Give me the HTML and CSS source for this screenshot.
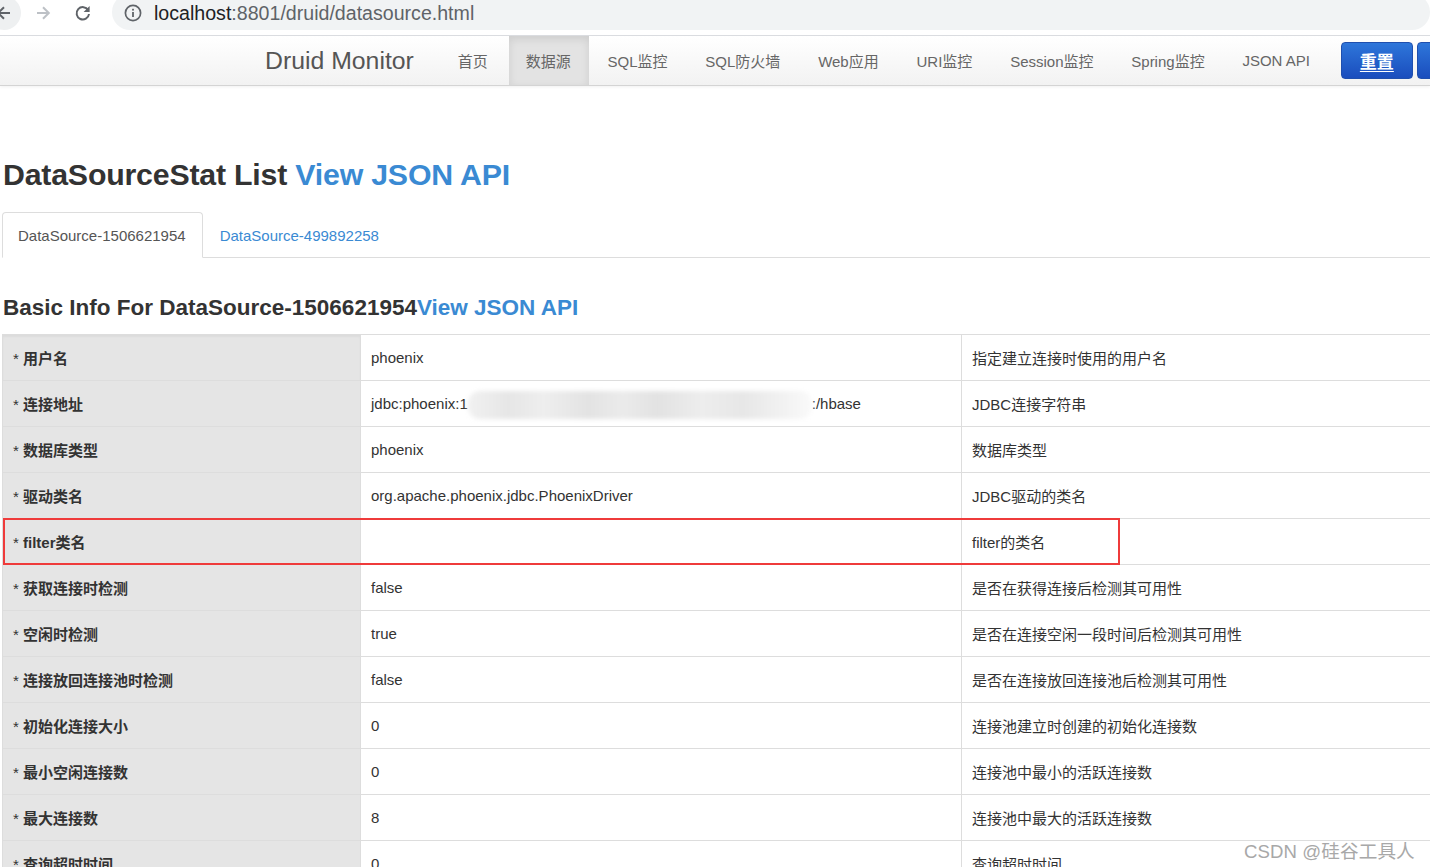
FILE: index.html
```html
<!DOCTYPE html>
<html lang="zh-CN">
<head>
<meta charset="utf-8">
<title>Druid DataSource</title>
<link rel="stylesheet" href="styles.css">
</head>
<body>
<div class="chrome">
  <div class="chrome-btn back">
    <svg width="20" height="20" viewBox="0 0 20 20"><path d="M16 10H4.5M10 4.2L4.2 10l5.8 5.8" fill="none" stroke="#5f6368" stroke-width="2"/></svg>
  </div>
  <div class="chrome-btn fwd">
    <svg width="20" height="20" viewBox="0 0 20 20"><path d="M4 10h11.5M10 4.2l5.8 5.8-5.8 5.8" fill="none" stroke="#bdc1c6" stroke-width="2"/></svg>
  </div>
  <div class="chrome-btn reload">
    <svg width="20" height="20" viewBox="0 0 20 20"><path d="M15.2 7.2A6.2 6.2 0 1 0 16 11" fill="none" stroke="#5f6368" stroke-width="2"/><path d="M16.6 3v6h-6z" fill="#5f6368"/></svg>
  </div>
  <div class="omnibox">
    <svg class="info" width="18" height="18" viewBox="0 0 18 18"><circle cx="9" cy="9" r="7.6" fill="none" stroke="#5f6368" stroke-width="1.7"/><rect x="8.1" y="8" width="1.8" height="5" fill="#5f6368"/><rect x="8.1" y="4.8" width="1.8" height="1.8" fill="#5f6368"/></svg>
    <span class="url"><span class="host">localhost</span>:8801/druid/datasource.html</span>
  </div>
</div>

<nav class="navbar">
  <div class="navbar-inner">
    <span class="brand">Druid Monitor</span>
    <ul class="nav">
      <li><a>首页</a></li>
      <li class="active"><a>数据源</a></li>
      <li><a>SQL监控</a></li>
      <li><a>SQL防火墙</a></li>
      <li><a>Web应用</a></li>
      <li><a>URI监控</a></li>
      <li><a>Session监控</a></li>
      <li><a>Spring监控</a></li>
      <li><a>JSON API</a></li>
    </ul>
    <button class="btn-reset">重置</button>
    <button class="btn-reset btn-next"></button>
  </div>
</nav>

<main class="content">
  <h1 class="title">DataSourceStat List <a class="link">View JSON API</a></h1>
  <ul class="tabs">
    <li class="tab active"><a>DataSource-1506621954</a></li>
    <li class="tab"><a>DataSource-499892258</a></li>
  </ul>
  <h3 class="subtitle">Basic Info For DataSource-1506621954<a class="link">View JSON API</a></h3>

  <div class="table-wrap">
    <table class="info-table">
      <colgroup><col class="c1"><col class="c2"><col class="c3"></colgroup>
      <tbody>
        <tr><th>* <b>用户名</b></th><td>phoenix</td><td>指定建立连接时使用的用户名</td></tr>
        <tr><th>* <b>连接地址</b></th><td>jdbc:phoenix:1<span class="blur"></span>:/hbase</td><td>JDBC连接字符串</td></tr>
        <tr><th>* <b>数据库类型</b></th><td>phoenix</td><td>数据库类型</td></tr>
        <tr><th>* <b>驱动类名</b></th><td>org.apache.phoenix.jdbc.PhoenixDriver</td><td>JDBC驱动的类名</td></tr>
        <tr><th>* <b>filter类名</b></th><td></td><td>filter的类名</td></tr>
        <tr><th>* <b>获取连接时检测</b></th><td>false</td><td>是否在获得连接后检测其可用性</td></tr>
        <tr><th>* <b>空闲时检测</b></th><td>true</td><td>是否在连接空闲一段时间后检测其可用性</td></tr>
        <tr><th>* <b>连接放回连接池时检测</b></th><td>false</td><td>是否在连接放回连接池后检测其可用性</td></tr>
        <tr><th>* <b>初始化连接大小</b></th><td>0</td><td>连接池建立时创建的初始化连接数</td></tr>
        <tr><th>* <b>最小空闲连接数</b></th><td>0</td><td>连接池中最小的活跃连接数</td></tr>
        <tr><th>* <b>最大连接数</b></th><td>8</td><td>连接池中最大的活跃连接数</td></tr>
        <tr><th>* <b>查询超时时间</b></th><td>0</td><td>查询超时时间</td></tr>
      </tbody>
    </table>
    <div class="highlight"></div>
  </div>
</main>

<div class="watermark">CSDN @硅谷工具人</div>
</body>
</html>
```

FILE: styles.css
```css
html, body {
  margin: 0;
  padding: 0;
  background: #fff;
  overflow: hidden;
  height: 867px;
}
body {
  font-family: "Liberation Sans", Arial, "Noto Sans CJK SC", sans-serif;
  color: #333;
  position: relative;
}

/* browser chrome */
.chrome {
  height: 36px;
  display: flex;
  align-items: flex-start;
  background: #fff;
  border-bottom: 1px solid #dadce0;
  box-sizing: border-box;
  position: relative;
  overflow: hidden;
}
.chrome-btn {
  width: 34px;
  height: 34px;
  display: flex;
  align-items: center;
  justify-content: center;
  margin-top: -4px;
  border-radius: 50%;
  flex: none;
}
.chrome-btn.back {
  margin-left: -13px;
  background: #eef0f1;
}
.chrome-btn.fwd { margin-left: 5px; }
.chrome-btn.reload { margin-left: 6px; }
.omnibox {
  margin-left: 12px;
  margin-top: -6px;
  height: 36px;
  flex: 1;
  background: #f1f3f4;
  border-radius: 18px;
  display: flex;
  align-items: center;
  padding-left: 12px;
  padding-top: 2px;
  box-sizing: border-box;
}
.omnibox .info { margin-right: 12px; flex: none; }
.url {
  font-family: "Liberation Sans", Arial, sans-serif;
  font-size: 19.6px;
  color: #5f6368;
  white-space: nowrap;
}
.url .host { color: #202124; }

/* navbar */
.navbar {
  height: 50px;
  background: linear-gradient(#ffffff, #f2f2f2);
  border-bottom: 1px solid #d4d4d4;
  box-shadow: 0 1px 3px rgba(0,0,0,0.06);
  box-sizing: border-box;
}
.navbar-inner {
  display: flex;
  align-items: center;
  height: 100%;
  padding-left: 265px;
  white-space: nowrap;
}
.brand {
  font-size: 24.8px;
  color: #555;
  margin-right: 25px;
  flex: none;
}
.nav {
  list-style: none;
  margin: 0;
  padding: 0;
  display: flex;
  height: 100%;
  flex: none;
}
.nav li { display: flex; flex: none; }
.nav a {
  display: flex;
  align-items: center;
  padding: 0 18.9px;
  font-size: 15px;
  color: #666;
  white-space: nowrap;
}
.nav li.active a {
  background: #e3e3e3;
  box-shadow: inset 0 3px 8px rgba(0,0,0,0.10);
  padding: 0 18px 0 17px;
  margin-left: 2px;
}
.btn-reset {
  margin-left: 12px;
  width: 72px;
  height: 37px;
  border: 1px solid #1f4fae;
  border-radius: 4px;
  background: linear-gradient(#2e76da, #1a4dbd);
  color: #fff;
  font-family: "Noto Sans CJK SC", sans-serif;
  font-weight: bold;
  font-size: 17px;
  text-decoration: underline;
  text-underline-offset: 3px;
  padding: 0;
  flex: none;
}
.btn-next {
  margin-left: 4px;
  width: 40px;
  text-decoration: none;
}

/* content */
.content {
  padding-left: 3px;
}
.title {
  font-size: 30.3px;
  font-weight: bold;
  line-height: 34px;
  margin: 72px 0 0 0;
  color: #333;
  letter-spacing: -0.2px;
}
.link {
  color: #3a8ad3;
  text-decoration: none;
}
.tabs {
  list-style: none;
  margin: 20px 0 0 -1px;
  padding: 0;
  display: flex;
  border-bottom: 1px solid #ddd;
  height: 46px;
  box-sizing: border-box;
}
.tab {
  display: flex;
  margin-bottom: -1px;
}
.tab a {
  display: flex;
  align-items: center;
  padding: 1px 16px 0 16px;
  font-size: 15px;
  color: #3a8ad3;
  border: 1px solid transparent;
  border-radius: 4px 4px 0 0;
}
.tab.active a {
  color: #555;
  background: #fff;
  border-color: #ddd;
  border-bottom-color: #fff;
  padding-left: 15px;
}
.subtitle {
  font-size: 22.5px;
  font-weight: bold;
  line-height: 26px;
  margin: 37px 0 0 0;
  color: #333;
}

.table-wrap {
  position: relative;
  margin: 13px 0 0 -1px;
}
.info-table {
  border-collapse: collapse;
  width: 100%;
  font-size: 15px;
  border-top: 1px solid #ddd;
  border-left: 1px solid #ddd;
}
.info-table col.c1 { width: 358px; }
.info-table col.c2 { width: 601px; }
.info-table th,
.info-table td {
  height: 46px;
  padding: 0 10px;
  border-top: 1px solid #ddd;
  border-left: 1px solid #ddd;
  text-align: left;
  vertical-align: middle;
  box-sizing: border-box;
  color: #333;
  white-space: nowrap;
}
.info-table th {
  background: #e5e5e5;
  font-weight: normal;
}
.info-table th b {
  font-weight: bold;
}
.info-table tr:first-child th {
  box-shadow: inset 0 2px 2px rgba(0,0,0,0.04);
}
.blur {
  display: inline-block;
  width: 344px;
  height: 28px;
  vertical-align: middle;
  margin: -7px 0;
  background: linear-gradient(90deg, #f1f1f1 0%, #e6e6e6 12%, #eeeeee 22%, #e3e3e3 35%, #ebebeb 45%, #e2e2e2 55%, #ededed 68%, #e7e7e7 80%, #f2f2f2 92%, #fafafa 100%);
  border-radius: 12px;
  filter: blur(2px);
}
.highlight {
  position: absolute;
  left: 1px;
  top: 184px;
  width: 1117px;
  height: 47px;
  border: 2px solid #ef3b3b;
  box-sizing: border-box;
  pointer-events: none;
}

.watermark {
  position: absolute;
  left: 1244px;
  top: 836px;
  font-size: 18.6px;
  color: #a8a8a8;
  letter-spacing: 0.1px;
  text-shadow: 0 0 1px #fff;
}
```
